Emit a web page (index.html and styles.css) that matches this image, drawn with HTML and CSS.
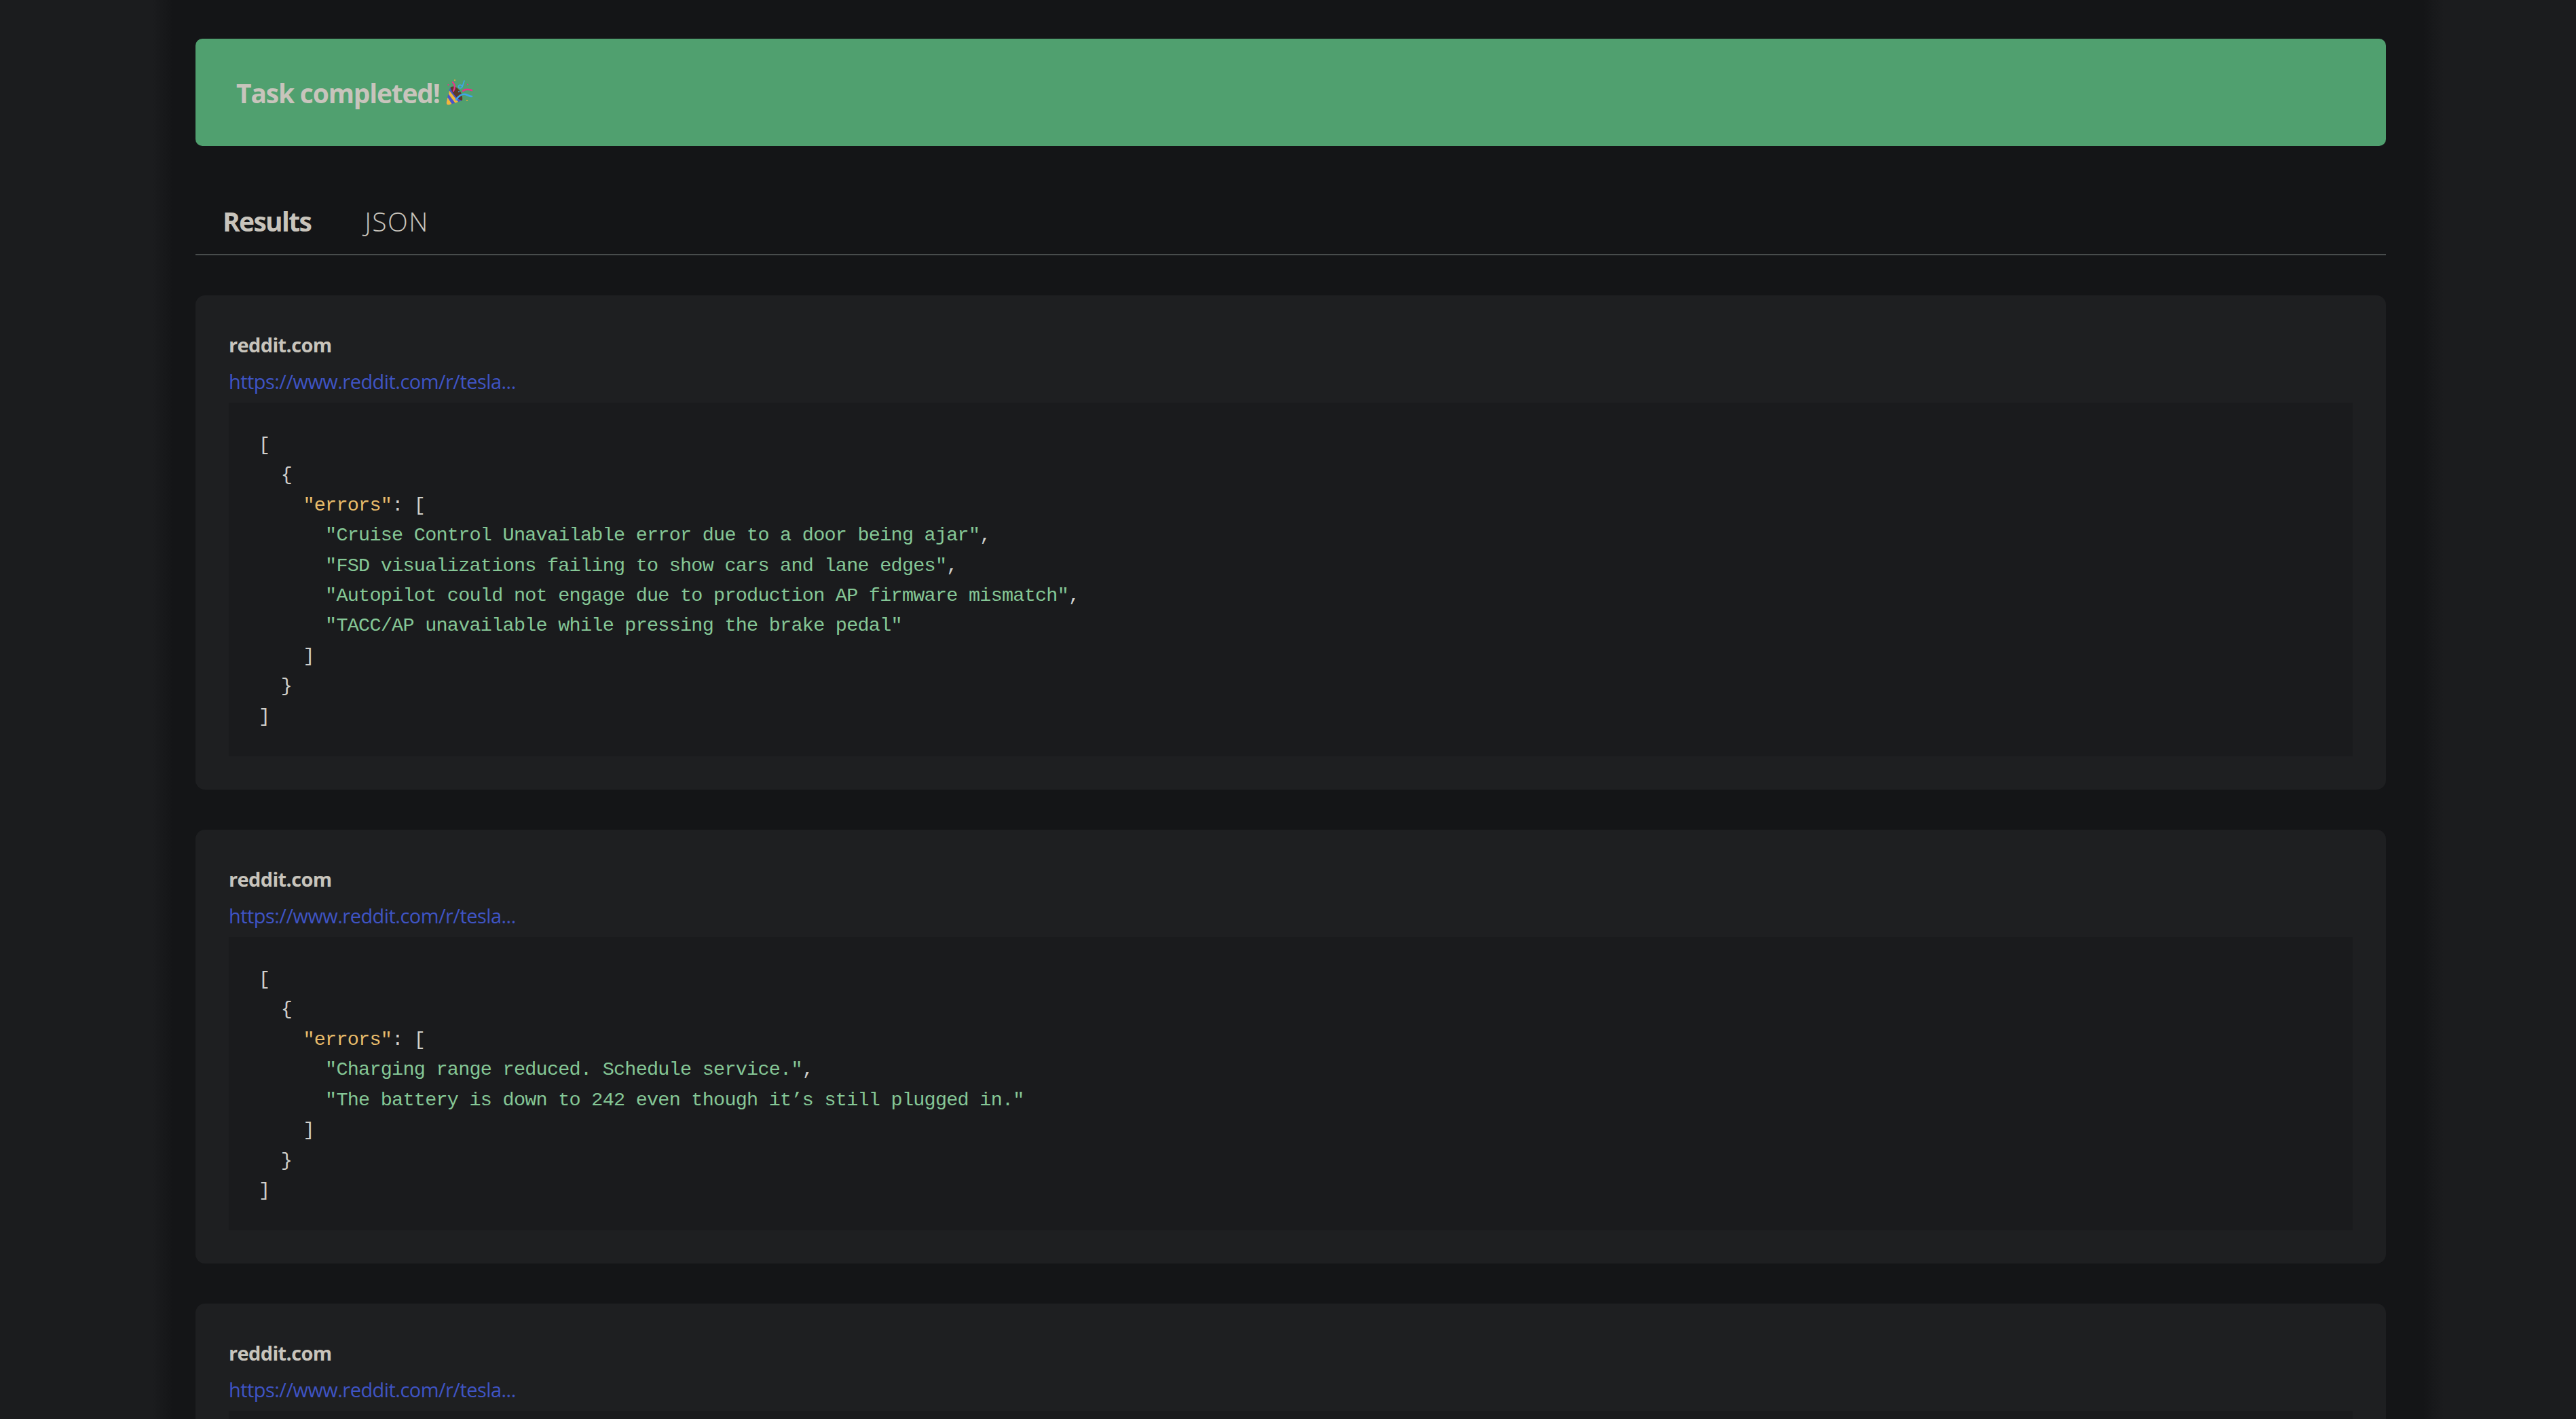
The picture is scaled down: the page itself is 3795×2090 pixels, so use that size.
FILE: index.html
```html
<!DOCTYPE html>
<html lang="en">
<head>
<meta charset="utf-8">
<title>Task completed</title>
<link rel="stylesheet" href="styles.css">
</head>
<body>
<main class="page">
  <div class="banner">
    <span>Task completed!</span>
    <svg class="party" viewBox="0 0 40 38" aria-hidden="true">
      <path d="M6 12 L0.5 33 Q0 38 4.5 37.5 L24 31 Q20 17 6 12Z" fill="#4a55c9"/>
      <path d="M5 16.5 L18 33 L13.5 34.7 L3.8 21.5Z M2.4 26.5 L8.5 36 L4.5 37.5 Q0 38 0.8 33Z" fill="#f0b93a"/>
      <path d="M6.5 12 C10 9 16 11 19 15 C23 19 25 26 24 31 C19 31 9 21 6.5 12Z" fill="#5c3a2a"/>
      <path d="M10 4 C13 7 14 12 11 17" fill="none" stroke="#e8338a" stroke-width="2.4" stroke-linecap="round"/>
      <path d="M25 17 C28 14.5 32 14 38 16" fill="none" stroke="#e8338a" stroke-width="2.4" stroke-linecap="round"/>
      <path d="M15 30 C18 24 24 21 29 22 C32 23 35 25 38 25" fill="none" stroke="#3ea6e8" stroke-width="2.6" stroke-linecap="round"/>
      <path d="M27 2 L24 11 C22 14 18 13 18.5 10 C19 7.5 22.5 7.5 23.5 10" fill="none" stroke="#3ea6e8" stroke-width="1.7" stroke-linecap="round"/>
      <circle cx="13" cy="1.2" r="1.1" fill="#e0a93a"/><circle cx="3.5" cy="8" r="1.1" fill="#e8338a"/>
      <circle cx="32" cy="7.5" r="1.1" fill="#e8338a"/><circle cx="31" cy="31" r="1.1" fill="#e0a93a"/>
      <circle cx="19" cy="18" r="1" fill="#3ea6e8"/>
    </svg>
  </div>
  <nav class="tabs">
    <a class="tab tab-active">Results</a>
    <a class="tab">JSON</a>
  </nav>
  <section class="card">
    <div class="source">reddit.com</div>
    <a class="link">https://www.reddit.com/r/tesla...</a>
<pre class="code"><span class="p">[</span>
  <span class="p">{</span>
    <span class="k">"errors"</span><span class="p">: [</span>
      <span class="s">"Cruise Control Unavailable error due to a door being ajar"</span><span class="p">,</span>
      <span class="s">"FSD visualizations failing to show cars and lane edges"</span><span class="p">,</span>
      <span class="s">"Autopilot could not engage due to production AP firmware mismatch"</span><span class="p">,</span>
      <span class="s">"TACC/AP unavailable while pressing the brake pedal"</span>
    <span class="p">]</span>
  <span class="p">}</span>
<span class="p">]</span></pre>
  </section>
  <section class="card">
    <div class="source">reddit.com</div>
    <a class="link">https://www.reddit.com/r/tesla...</a>
<pre class="code"><span class="p">[</span>
  <span class="p">{</span>
    <span class="k">"errors"</span><span class="p">: [</span>
      <span class="s">"Charging range reduced. Schedule service."</span><span class="p">,</span>
      <span class="s">"The battery is down to 242 even though it’s still plugged in."</span>
    <span class="p">]</span>
  <span class="p">}</span>
<span class="p">]</span></pre>
  </section>
  <section class="card">
    <div class="source">reddit.com</div>
    <a class="link">https://www.reddit.com/r/tesla...</a>
    <pre class="code"> </pre>
  </section>
</main>
</body>
</html>
```
FILE: styles.css
```css
html, body {
  margin: 0;
  height: 100%;
  overflow: hidden;
  background: #1b1c1e;
}
.page {
  box-sizing: border-box;
  height: 2090px;
  overflow: hidden;
  margin-left: 225px;
  width: 3375px;
  padding: 57px 85px 0 63px;
  background: linear-gradient(90deg, #1b1c1e 0, #141517 30px, #141517 3345px, #1b1c1e 100%);
  font-family: "Open Sans", "Noto Sans", sans-serif;
  color: #c8c4bc;
}
.banner {
  display: flex;
  align-items: center;
  gap: 9px;
  height: 158px;
  padding-left: 60px;
  background: #50a06f;
  border-radius: 10px;
  font-size: 39px;
  font-weight: 700;
  letter-spacing: -1.2px;
}
.party {
  width: 40px;
  height: 38px;
  flex: none;
}
.tabs {
  display: flex;
  gap: 79px;
  margin-top: 82px;
  padding: 0 40px 19px;
  border-bottom: 2px solid #484c4c;
  font-size: 39px;
  line-height: 58px;
  letter-spacing: 1.5px;
}
.tab {
  font-weight: 300;
}
.tab-active {
  font-weight: 700;
  letter-spacing: -1.7px;
}
.card {
  margin-top: 59px;
  padding: 49px;
  background: #1e1f21;
  border-radius: 14px;
}
.source {
  font-size: 29px;
  font-weight: 700;
  line-height: 44px;
  letter-spacing: -0.65px;
  position: relative;
  top: 2px;
}
.link {
  display: block;
  margin-top: 12px;
  color: #3f54c4;
  font-size: 29px;
  line-height: 44px;
  letter-spacing: -0.55px;
}
.code {
  margin: 9px 0 0;
  padding: 41px 44px 36px;
  background: #1a1b1d;
  font-family: "Liberation Mono", "DejaVu Sans Mono", monospace;
  font-size: 28.5px;
  letter-spacing: -0.76px;
  line-height: 44.4px;
  color: #c8c4bc;
}
.k {
  color: #e9bd6b;
}
.s {
  color: #85c796;
}
.p {
  color: #d0d0cc;
}
```
